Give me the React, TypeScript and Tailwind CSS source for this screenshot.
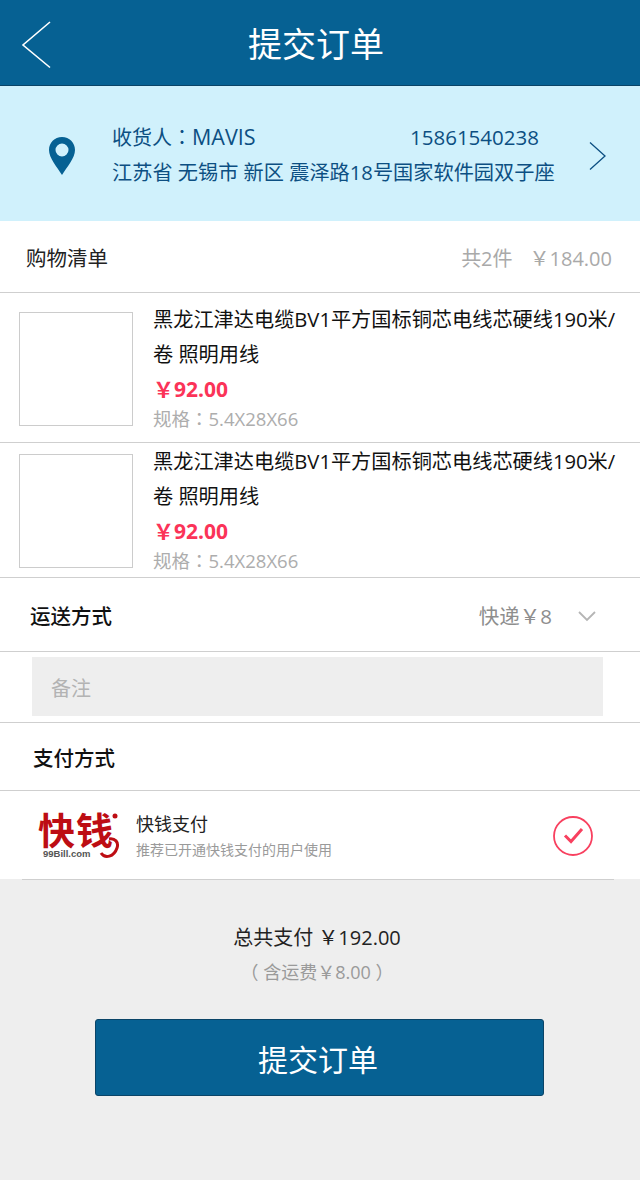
import React from 'react';

const FONT = 'font-["Open_Sans","Noto_Sans_CJK_SC",sans-serif]';

const items = [
  { id: 1, rowClass: 'h-[150px] pt-[9px]' },
  { id: 2, rowClass: 'h-[135px] pt-[1px]' },
];

// 全角コロンが中央に来るフォント
function Colon() {
  return <span className="font-['Noto_Sans_CJK_TC',sans-serif]">：</span>;
}

function ProductRow({ rowClass }: { rowClass: string }) {
  return (
    <div className={`flex items-start border-b border-[#cfcfcf] pl-[19px] ${rowClass}`}>
      <div className="mt-[10px] h-[114px] w-[114px] shrink-0 border border-[#cccccc] bg-white" />
      <div className="ml-[20px] min-w-0 flex-1">
        <p className="w-[470px] text-[20.200px] leading-[35px] text-[#111]">
          黑龙江津达电缆BV1平方国标铜芯电线芯硬线190米/卷 照明用线
        </p>
        <p className="mt-[1px] text-[21px] font-bold leading-[32px] text-[#fb3358]">￥92.00</p>
        <p className="text-[18.500px] leading-[26px] text-[#adadad]">
          规格<Colon />5.4X28X66
        </p>
      </div>
    </div>
  );
}

export default function App() {
  return (
    <div className={`flex min-h-[1180px] w-[640px] flex-col bg-[#eeeeee] ${FONT}`}>
      {/* 标题 */}
      <header className="relative flex h-[86px] items-center justify-center border-b border-[#0a4467] bg-[#066193] pr-[8px] pt-[2px]">
        <svg className="absolute left-[20px] top-[20px]" width="34" height="50" viewBox="0 0 34 50" fill="none">
          <path d="M30 2 L3 25 L30 47.500" stroke="#fff" strokeWidth="1.600" />
        </svg>
        <h1 className="text-[34px] font-normal leading-none text-white">提交订单</h1>
      </header>

      {/* 收货地址 */}
      <section className="flex h-[135px] items-center bg-[#d0f1fc] pl-[48px] text-[#0c4f82]">
        <svg width="28" height="40" viewBox="0 0 28 40" className="mt-[5px] shrink-0">
          <path
            fillRule="evenodd"
            fill="#066193"
            d="M14 1 C6.500 1 1 6.800 1 14 C1 22 9 31 14 39 C19 31 27 22 27 14 C27 6.800 21.500 1 14 1 Z M14 7.500 A6.500 6.500 0 1 1 14 20.500 A6.500 6.500 0 1 1 14 7.500 Z"
          />
        </svg>
        <div className="ml-[36px] w-[442px] shrink-0 pt-[2px]">
          <div className="flex h-[35px] items-center text-[20.500px]">
            <span className="w-[298px] text-[20px]">
              收货人<Colon />
              <span className="text-[21.500px]">MAVIS</span>
            </span>
            <span>15861540238</span>
          </div>
          <div className="flex h-[35px] items-center whitespace-nowrap text-[20.200px]">
            江苏省 无锡市 新区 震泽路18号国家软件园双子座
          </div>
        </div>
        <svg width="20" height="30" viewBox="0 0 20 30" fill="none" className="ml-[34px] mt-[5px]">
          <path d="M2 1.500 L17 15 L2 28.500" stroke="#0c4f82" strokeWidth="1.300" />
        </svg>
      </section>

      {/* 购物清单 */}
      <div className="bg-white">
        <div className="flex h-[72px] items-center justify-between border-b border-[#cfcfcf] pl-[26px] pr-[28px] pt-[4px]">
          <span className="text-[20.500px] text-[#222]">购物清单</span>
          <div className="flex gap-[17px] text-[20px] text-[#a9a9a9]">
            <span>共2件</span>
            <span>￥184.00</span>
          </div>
        </div>

        {items.map((item) => (
          <ProductRow key={item.id} rowClass={item.rowClass} />
        ))}

        {/* 运送方式 */}
        <div className="flex h-[74px] items-center border-b border-[#cfcfcf] pl-[30px] pr-[44px] pt-[4px]">
          <span className="flex-1 text-[20.500px] font-medium text-[#111]">运送方式</span>
          <span className="text-[20.500px] text-[#8e8e8e]">快递￥8</span>
          <svg width="18" height="11" viewBox="0 0 18 11" fill="none" className="ml-[26px]">
            <path d="M1 1 L9 9 L17 1" stroke="#b5b5b5" strokeWidth="1.800" />
          </svg>
        </div>

        {/* 备注 */}
        <div className="h-[71px] border-b border-[#cfcfcf] pl-[32px] pt-[5px]">
          <div className="flex h-[59px] w-[571px] items-center bg-[#eeeeee] pl-[19px] pt-[4px] text-[20px] text-[#b3b3b3]">备注</div>
        </div>

        {/* 支付方式 */}
        <div className="flex h-[68px] items-center border-b border-[#cfcfcf] pl-[33px] pt-[4px]">
          <span className="text-[20.500px] font-medium text-[#111]">支付方式</span>
        </div>

        <div className="flex h-[88px] items-center pl-[38px]">
          <div className="relative h-[48px] w-[83px] shrink-0">
            <p className="whitespace-nowrap font-['Noto_Sans_CJK_SC',sans-serif] text-[37px] font-bold leading-[37px] tracking-[1px] text-[#bd0d13]">
              快钱
            </p>
            <p className="ml-[5px] w-fit font-['Liberation_Sans',sans-serif] text-[9.500px] font-bold leading-[11px] text-[#555]">
              99Bill.com
            </p>
            <svg width="32" height="48" viewBox="0 0 32 48" fill="none" className="absolute right-0 top-0">
              <circle cx="26" cy="5" r="2.500" fill="#bd0d13" />
              <path d="M12 42 C16 48 25 46 28 37 C30 31 26 27 20 28" stroke="#bd0d13" strokeWidth="3" />
            </svg>
          </div>
          <div className="ml-[15px] flex-1">
            <p className="text-[18px] leading-[28px] text-[#222]">快钱支付</p>
            <p className="mt-[1px] text-[14px] leading-[22px] text-[#9a9a9a]">推荐已开通快钱支付的用户使用</p>
          </div>
          <svg width="42" height="42" viewBox="0 0 42 42" fill="none" className="mr-[46px] mt-[1px]">
            <circle cx="21" cy="21" r="19" stroke="#f8405f" strokeWidth="1.800" />
            <path d="M13 20.500 L19 26.500 L30 14" stroke="#f8405f" strokeWidth="3" />
          </svg>
        </div>
      </div>

      {/* 合计 */}
      <div className="flex flex-1 flex-col items-center pr-[1px]">
        <div className="ml-[22px] h-px w-[592px] self-start bg-[#cfcfcf]" />
        <p className="mt-[43px] pr-[5px] text-[20px] leading-[30px] text-[#222]">总共支付 ￥192.00</p>
        <p className="mt-[4px] pr-[5px] text-[18px] leading-[30px] text-[#9a9a9a]">（ 含运费￥8.00 ）</p>
        <button className="mt-[32px] flex h-[77px] w-[449px] items-center justify-center rounded-[3px] border border-[#0a4467] bg-[#066193] pr-[3px] pt-[3px] text-[30px] text-white">
          提交订单
        </button>
      </div>
    </div>
  );
}
